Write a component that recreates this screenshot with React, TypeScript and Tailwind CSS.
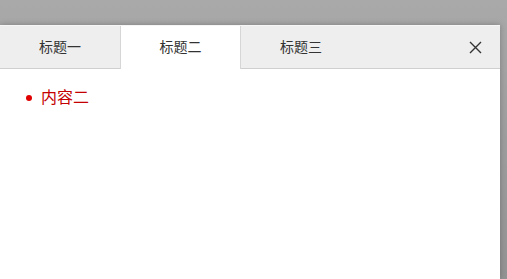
const tabs = ['标题一', '标题二', '标题三'];

export default function App() {
  const active = 1;
  return (
    <div
      className="h-[279px] w-[507px] overflow-hidden bg-gradient-to-b from-[#a9a9a9] to-[#949494] pt-[25px] pr-[7px]"
      style={{ fontFamily: '"Liberation Sans", "Noto Sans CJK SC", sans-serif' }}
    >
      <div className="h-full w-full bg-white shadow-[0_0_6px_rgba(0,0,0,0.25)]">
        <div className="flex h-[44px] items-stretch border-t border-[#f6f6f6] border-b border-b-[#cfcfcf] bg-[#eeeeee]">
          {tabs.map((t, i) => (
            <div
              key={t}
              className={
                i === active
                  ? 'relative -mb-px flex w-[121px] items-center justify-center border-x border-[#d6d6d6] bg-white text-[14px] text-[#333]'
                  : 'flex w-[120px] items-center justify-center text-[14px] text-[#333]'
              }
            >
              {t}
            </div>
          ))}
          <div className="flex-1" />
          <button className="flex w-[50px] items-center justify-center text-[#333]">
            <svg width="13" height="13" viewBox="0 0 13 13" fill="none" stroke="currentColor" strokeWidth="1.4">
              <path d="M1 1L12 12M12 1L1 12" />
            </svg>
          </button>
        </div>
        <ul className="px-[26px] pt-[19px]">
          <li className="flex items-center gap-[9px] text-[16px] leading-[20px] text-[#c40000]">
            <span className="h-[6px] w-[6px] rounded-full bg-[#e00000]" />
            内容二
          </li>
        </ul>
      </div>
    </div>
  );
}
